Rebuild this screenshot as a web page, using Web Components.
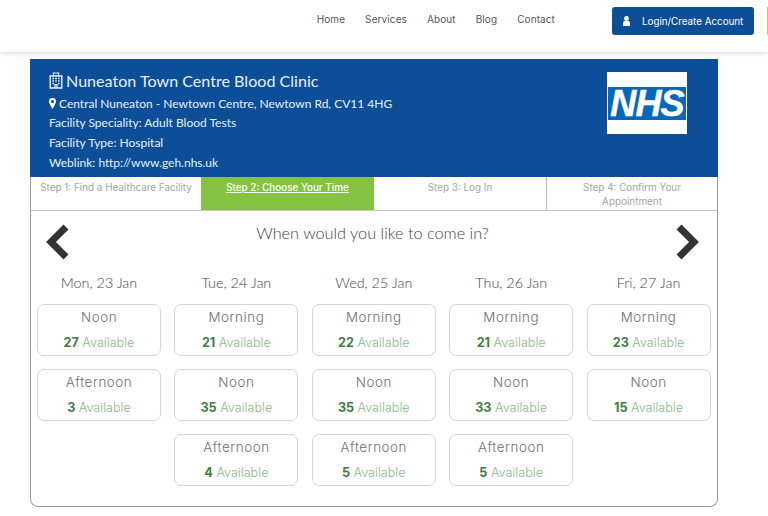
<!DOCTYPE html>
<html lang="en">
<head>
<meta charset="UTF-8">
<title>Choose Your Time</title>
<style>
  html, body { margin: 0; padding: 0; background: #fff; }
  body { font-family: "Open Sans", sans-serif; overflow: hidden; }
</style>
</head>
<body>
<site-header></site-header>
<booking-card>
  <clinic-banner></clinic-banner>
  <step-bar></step-bar>
  <time-picker></time-picker>
</booking-card>

<script>
  const SANS = '"Inter", "Noto Sans", sans-serif';
  const HUMAN = '"Lato", "Open Sans", sans-serif';

  class SiteHeader extends HTMLElement {
    constructor() {
      super();
      this.attachShadow({ mode: 'open' });
      const links = ['Home', 'Services', 'About', 'Blog', 'Contact'];
      this.shadowRoot.innerHTML = `
        <style>
          :host { display: flex; height: 52px; box-sizing: border-box; justify-content: flex-end;
                  padding: 7px 0 0 0; background: #fff; box-shadow: 0 1px 5px rgba(0,0,0,.16);
                  font-family: ${SANS}; position: relative; }
          nav { display: flex; gap: 20px; margin: 5px 57px 0 0; height: 14px; }
          a { font-size: 10px; line-height: 14px; color: #555; letter-spacing: .1px; text-decoration: none; }
          .login { display: flex; align-items: center; width: 142px; height: 28px; box-sizing: border-box;
                   padding-left: 10px; background: #0c4e98; border-radius: 3px; color: #fff; font-size: 9.8px; }
          .login svg { width: 9px; height: 10px; margin-right: 11px; }
          .sliver { width: 1px; height: 28px; margin-left: 13px; background: #b5d65a; }
        </style>
        <nav>${links.map(l => `<a>${l}</a>`).join('')}</nav>
        <div class="login">
          <svg viewBox="0 0 9 10"><circle cx="4.5" cy="2.5" r="2.4" fill="#fff"/><path d="M1 10V6.6C1 5.5 2 5 3 5h3c1 0 2 .5 2 1.6V10z" fill="#fff"/></svg>
          Login/Create Account
        </div>
        <div class="sliver"></div>`;
    }
  }

  class BookingCard extends HTMLElement {
    constructor() {
      super();
      this.attachShadow({ mode: 'open' });
      this.shadowRoot.innerHTML = `
        <style>
          :host { display: block; width: 688px; height: 448px; margin: 7px 0 0 30px; box-sizing: border-box;
                  border: 1px solid #999; border-top: 0; border-radius: 0 0 8px 8px; background: #fff; }
        </style>
        <slot></slot>`;
    }
  }

  class ClinicBanner extends HTMLElement {
    constructor() {
      super();
      this.attachShadow({ mode: 'open' });
      this.shadowRoot.innerHTML = `
        <style>
          :host { display: flex; justify-content: space-between; height: 118px; box-sizing: border-box;
                  margin: 0 -1px; padding: 9px 31px 0 19px; background: #0c4e98; color: #e8eef6;
                  font-family: ${HUMAN}; }
          h1 { margin: 0; display: flex; align-items: center; gap: 3px; font-size: 16.1px; line-height: 25.5px; font-weight: 400; }
          p { margin: 0; display: flex; align-items: center; gap: 3px; font-size: 12px; line-height: 19.8px; }
          .logo { width: 80px; height: 62px; margin-top: 4px; background: #fff; display: flex; align-items: center; justify-content: center; }
          .band { width: 78px; height: 33px; background: #0a67b8; color: #fff; text-align: center;
                  font: italic 700 36px/33px "Liberation Sans", sans-serif; letter-spacing: -.8px;
                  -webkit-text-stroke: .5px #fff; }
        </style>
        <div>
          <h1><svg width="14" height="17" viewBox="0 0 14 17" fill="none"><path d="M1.2 4h11.6v12H1.2z" stroke="#e8eef6" stroke-width="1.4"/><path d="M4.5 4V1h5v3" stroke="#e8eef6" stroke-width="1.2"/><path d="M3.4 6.5h1.6M6.2 6.5h1.6M9 6.5h1.6M3.4 9h1.6M6.2 9h1.6M9 9h1.6M3.4 11.5h1.6M9 11.5h1.6M6 16v-3.4h2V16" stroke="#e8eef6" stroke-width="1.3"/></svg>Nuneaton Town Centre Blood Clinic</h1>
          <p><svg width="7" height="11" viewBox="0 0 7 11"><path fill-rule="evenodd" d="M3.5 0a3.5 3.5 0 0 1 3.5 3.6C7 5.6 4.6 9 3.5 11 2.4 9 0 5.6 0 3.6A3.5 3.5 0 0 1 3.5 0zm0 2.1a1.5 1.5 0 1 0 0 3 1.5 1.5 0 0 0 0-3z" fill="#fff"/></svg>Central Nuneaton - Newtown Centre, Newtown Rd, CV11 4HG</p>
          <p>Facility Speciality: Adult Blood Tests</p>
          <p>Facility Type: Hospital</p>
          <p>Weblink: http://www.geh.nhs.uk</p>
        </div>
        <div class="logo"><div class="band">NHS</div></div>`;
    }
  }

  class StepBar extends HTMLElement {
    constructor() {
      super();
      this.attachShadow({ mode: 'open' });
      const steps = ['Step 1: Find a Healthcare Facility', 'Step 2: Choose Your Time', 'Step 3: Log In', 'Step 4: Confirm Your Appointment'];
      this.shadowRoot.innerHTML = `
        <style>
          :host { display: grid; grid-template-columns: 170px 173px 172px 1fr; height: 34px; box-sizing: border-box;
                  border-bottom: 1px solid #c4c4c4; font-family: ${SANS}; }
          div { box-sizing: border-box; padding: 4px 4px 0; font-size: 9.9px; line-height: 13.5px; text-align: center; color: #a3a3a3; }
          div + div { border-left: 1px solid #bbb; }
          div:last-child { padding: 4px 28px 0; }
          .on { background: #84c341; color: #fff; text-decoration: underline; border: 0; font-weight: 500; }
          .on + div { border-left: 0; }
        </style>
        ${steps.map((s, i) => `<div class="${i === 1 ? 'on' : ''}">${s}</div>`).join('')}`;
    }
  }

  class SlotCard extends HTMLElement {
    constructor() {
      super();
      this.attachShadow({ mode: 'open' });
      this.shadowRoot.innerHTML = `
        <style>
          :host { display: block; height: 52px; box-sizing: border-box; border: 1px solid #d4d4d4; border-radius: 7px;
                  text-align: center; font-family: ${SANS}; }
          .t { margin-top: 4px; font-size: 13.4px; line-height: 16px; letter-spacing: .55px; font-weight: 300; color: #707070; }
          .a { margin-top: 10px; font-size: 12.6px; line-height: 16px; font-weight: 300; color: #8ab58c; }
          b { color: #3f7d42; font-weight: 700; }
        </style>
        <div class="t">${this.getAttribute('period')}</div>
        <div class="a"><b>${this.getAttribute('count')}</b> Available</div>`;
    }
  }

  class TimePicker extends HTMLElement {
    constructor() {
      super();
      this.attachShadow({ mode: 'open' });
      const days = [
        ['Mon, 23 Jan', [['Noon', 27], ['Afternoon', 3]]],
        ['Tue, 24 Jan', [['Morning', 21], ['Noon', 35], ['Afternoon', 4]]],
        ['Wed, 25 Jan', [['Morning', 22], ['Noon', 35], ['Afternoon', 5]]],
        ['Thu, 26 Jan', [['Morning', 21], ['Noon', 33], ['Afternoon', 5]]],
        ['Fri, 27 Jan', [['Morning', 23], ['Noon', 15]]]
      ];
      this.shadowRoot.innerHTML = `
        <style>
          :host { display: block; font-family: ${HUMAN}; color: #555; padding: 0 6px; }
          .top { display: flex; justify-content: space-between; align-items: flex-start; height: 59px; padding: 0 12px 0 9px; }
          .top svg { width: 24px; height: 36px; margin-top: 13px; }
          h2 { margin: 10px 0 0; font-size: 16.3px; line-height: 24px; font-weight: 300; color: #444; }
          .days { display: grid; grid-template-columns: repeat(5, 124px); column-gap: 13.4px; }
          .day { display: flex; flex-direction: column; gap: 13px; }
          .name { height: 21px; text-align: center; font-size: 14.4px; line-height: 26px; font-weight: 300; color: #444; }
        </style>
        <div class="top">
          <svg viewBox="0 0 24 36"><path d="M20 3L5 18l15 15" fill="none" stroke="#333" stroke-width="7"/></svg>
          <h2>When would you like to come in?</h2>
          <svg viewBox="0 0 24 36"><path d="M4 3l15 15L4 33" fill="none" stroke="#333" stroke-width="7"/></svg>
        </div>
        <div class="days">
          ${days.map(([name, slots]) => `
            <div class="day">
              <div class="name">${name}</div>
              ${slots.map(([p, c]) => `<slot-card period="${p}" count="${c}"></slot-card>`).join('')}
            </div>`).join('')}
        </div>`;
    }
  }

  customElements.define('site-header', SiteHeader);
  customElements.define('booking-card', BookingCard);
  customElements.define('clinic-banner', ClinicBanner);
  customElements.define('step-bar', StepBar);
  customElements.define('slot-card', SlotCard);
  customElements.define('time-picker', TimePicker);
</script>
</body>
</html>
